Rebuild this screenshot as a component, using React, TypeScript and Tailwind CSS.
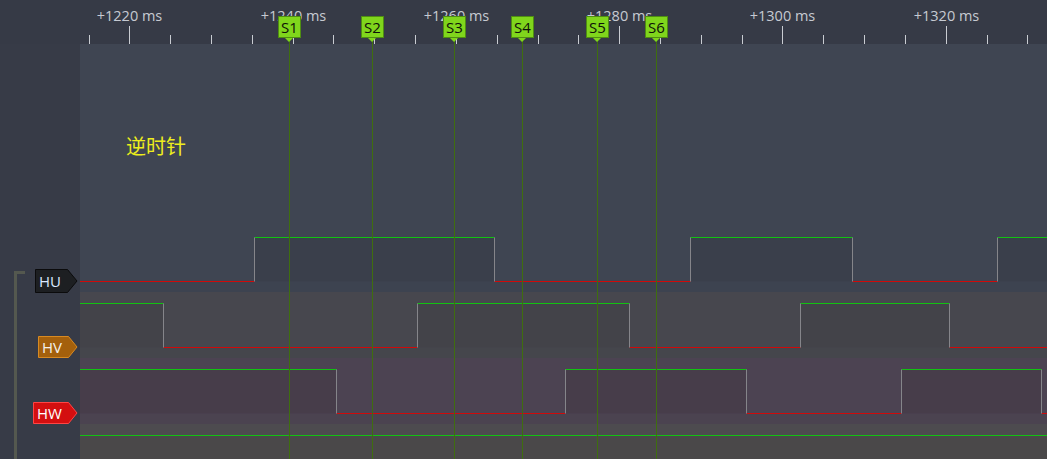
const W = 967;
const HI = 11.5;
const LO = 55.5;

type Row = { name: string; edges: number[]; startHigh: boolean; bg: string; band: string; fill: string };

const rows: Row[] = [
  { name: "HU", edges: [174.5, 414.5, 610.5, 772.5, 917.5], startHigh: false, bg: "bg-[#3f4552]", band: "bg-[#3d4350]", fill: "#3a3f4b" },
  { name: "HV", edges: [83.5, 337.5, 549.5, 720.5, 869.5], startHigh: true, bg: "bg-[#47474e]", band: "bg-[#45464c]", fill: "#434349" },
  { name: "HW", edges: [256.5, 485.5, 666.5, 821.5, 961.5], startHigh: true, bg: "bg-[#4c4352]", band: "bg-[#4b4350]", fill: "#473d4a" },
];

const markers = [
  { id: "S1", x: 289 },
  { id: "S2", x: 372 },
  { id: "S3", x: 454 },
  { id: "S4", x: 522 },
  { id: "S5", x: 597 },
  { id: "S6", x: 656 },
];

const majors = ["+1220 ms", "+1240 ms", "+1260 ms", "+1280 ms", "+1300 ms", "+1320 ms"];

function Trace({ edges, startHigh, fill }: { edges: number[]; startHigh: boolean; fill: string }) {
  const xs = [0, ...edges, W];
  const segs = [];
  for (let i = 0; i < xs.length - 1; i++) {
    const high = startHigh ? i % 2 === 0 : i % 2 === 1;
    segs.push({ a: xs[i], b: xs[i + 1], high });
  }
  return (
    <svg width={W} height={66} className="block">
      {segs.map((s, i) =>
        s.high ? <rect key={"f" + i} x={s.a} y={HI} width={s.b - s.a} height={LO - HI} fill={fill} /> : null
      )}
      {segs.map((s, i) => (
        <line
          key={"h" + i}
          x1={s.a}
          x2={s.b}
          y1={s.high ? HI : LO}
          y2={s.high ? HI : LO}
          stroke={s.high ? "#12c212" : "#d00a0a"}
          strokeWidth={1}
        />
      ))}
      {edges.map((x, i) => (
        <line key={"e" + i} x1={x} x2={x} y1={HI} y2={LO} stroke="#85858a" strokeWidth={1} />
      ))}
    </svg>
  );
}

const labelFont = "'Open Sans', 'Noto Sans', sans-serif";

function Label({ name }: { name: string }) {
  if (name === "HU")
    return (
      <svg width={43} height={24} className="block mb-[-1px]">
        <polygon points="0.5,0.5 32.5,0.5 42,12 32.5,23.5 0.5,23.5" fill="#1d1f22" stroke="#0b0b0c" />
        <text x={4} y={18} fontSize={15} fill="#dbe8ff" fontFamily={labelFont}>HU</text>
      </svg>
    );
  if (name === "HV")
    return (
      <svg width={40} height={22} className="block">
        <polygon points="0.5,0.5 30.5,0.5 39,11 30.5,21.5 0.5,21.5" fill="#a4600c" stroke="#d88a22" />
        <text x={4} y={17} fontSize={15} fill="#f4f0ea" fontFamily={labelFont}>HV</text>
      </svg>
    );
  return (
    <svg width={45} height={22} className="block">
      <polygon points="0.5,0.5 35.5,0.5 44,11 35.5,21.5 0.5,21.5" fill="#d40f10" stroke="#ff4545" />
      <text x={4} y={17} fontSize={15} fill="#ffffff" fontFamily={labelFont}>HW</text>
    </svg>
  );
}

export default function App() {
  const ticks = [];
  for (let i = 0; 88.5 + 40.82 * i < 1047; i++) ticks.push({ x: Math.round(88.5 + 40.82 * i) + 0.5, major: (i - 1) % 4 === 0 });
  const majorXs = ticks.filter((t) => t.major).map((t) => t.x);

  return (
    <div className="relative w-[1047px] h-[459px] overflow-hidden bg-[#373b47] font-['Open_Sans','Noto_Sans',sans-serif]">
      {/* ruler */}
      <div className="relative h-[44px] bg-[#363a46]">
        <svg width={1047} height={44} className="block">
          {ticks.map((t, i) => (
            <line key={i} x1={t.x} x2={t.x} y1={t.major ? 26 : 35} y2={44} stroke="#c9ccd2" strokeWidth={1} />
          ))}
        </svg>
        {majors.map((m, i) => (
          <span
            key={m}
            className="absolute top-[6px] -translate-x-1/2 whitespace-nowrap text-[14.5px] leading-[20px] text-[#c6cad2]"
            style={{ left: majorXs[i] }}
          >
            {m}
          </span>
        ))}
      </div>

      <div className="flex h-[415px]">
        {/* left panel */}
        <div className="flex w-[80px] bg-[#373b47]">
          <div className="w-[33px] pt-[227px] pl-[14px]">
            <div className="h-full w-[11px] border-l-[3px] border-t-[3px] border-[#54584f]" />
          </div>
          <div className="flex flex-1 flex-col items-end pr-[2px]">
            <div className="h-[182px]" />
            {rows.map((r) => (
              <div key={r.name} className="flex h-[66px] items-end">
                <Label name={r.name} />
              </div>
            ))}
          </div>
        </div>

        {/* main */}
        <div className="flex w-[967px] flex-col">
          <div className="h-[182px] bg-[#3f4552] pl-[46px] pt-[91px]">
            <span className="text-[20px] leading-[22px] text-[#eeee1c] font-['Noto_Sans_CJK_SC',sans-serif]">逆时针</span>
          </div>
          {rows.map((r) => (
            <div key={r.name} className={`relative h-[66px] ${r.bg}`}>
              <div className={`absolute bottom-0 left-0 right-0 h-[10px] ${r.band}`} />
              <div className="relative">
                <Trace edges={r.edges} startHigh={r.startHigh} fill={r.fill} />
              </div>
            </div>
          ))}
          <div className="flex-1 bg-[#4a4849]">
            <div className="h-[12px] bg-[#4d4b4f] border-b border-[#12c212]" />
          </div>
        </div>
      </div>

      {/* cursors */}
      <div className="pointer-events-none absolute inset-0">
        {markers.map((m) => (
          <div key={m.id}>
            <div className="absolute top-[40px] bottom-0 w-px bg-[#3f6e0f]" style={{ left: m.x }} />
            <div
              className="absolute top-[16px] flex h-[22px] w-[23px] items-center justify-center border border-[#4f8e12] bg-[#80d61c] text-[15px] leading-none text-[#0e1208]"
              style={{ left: m.x - 11 }}
            >
              {m.id}
            </div>
            <div
              className="absolute top-[38px] h-0 w-0 border-x-[4px] border-t-[4px] border-x-transparent border-t-[#80d61c]"
              style={{ left: m.x - 4 }}
            />
          </div>
        ))}
      </div>
    </div>
  );
}
